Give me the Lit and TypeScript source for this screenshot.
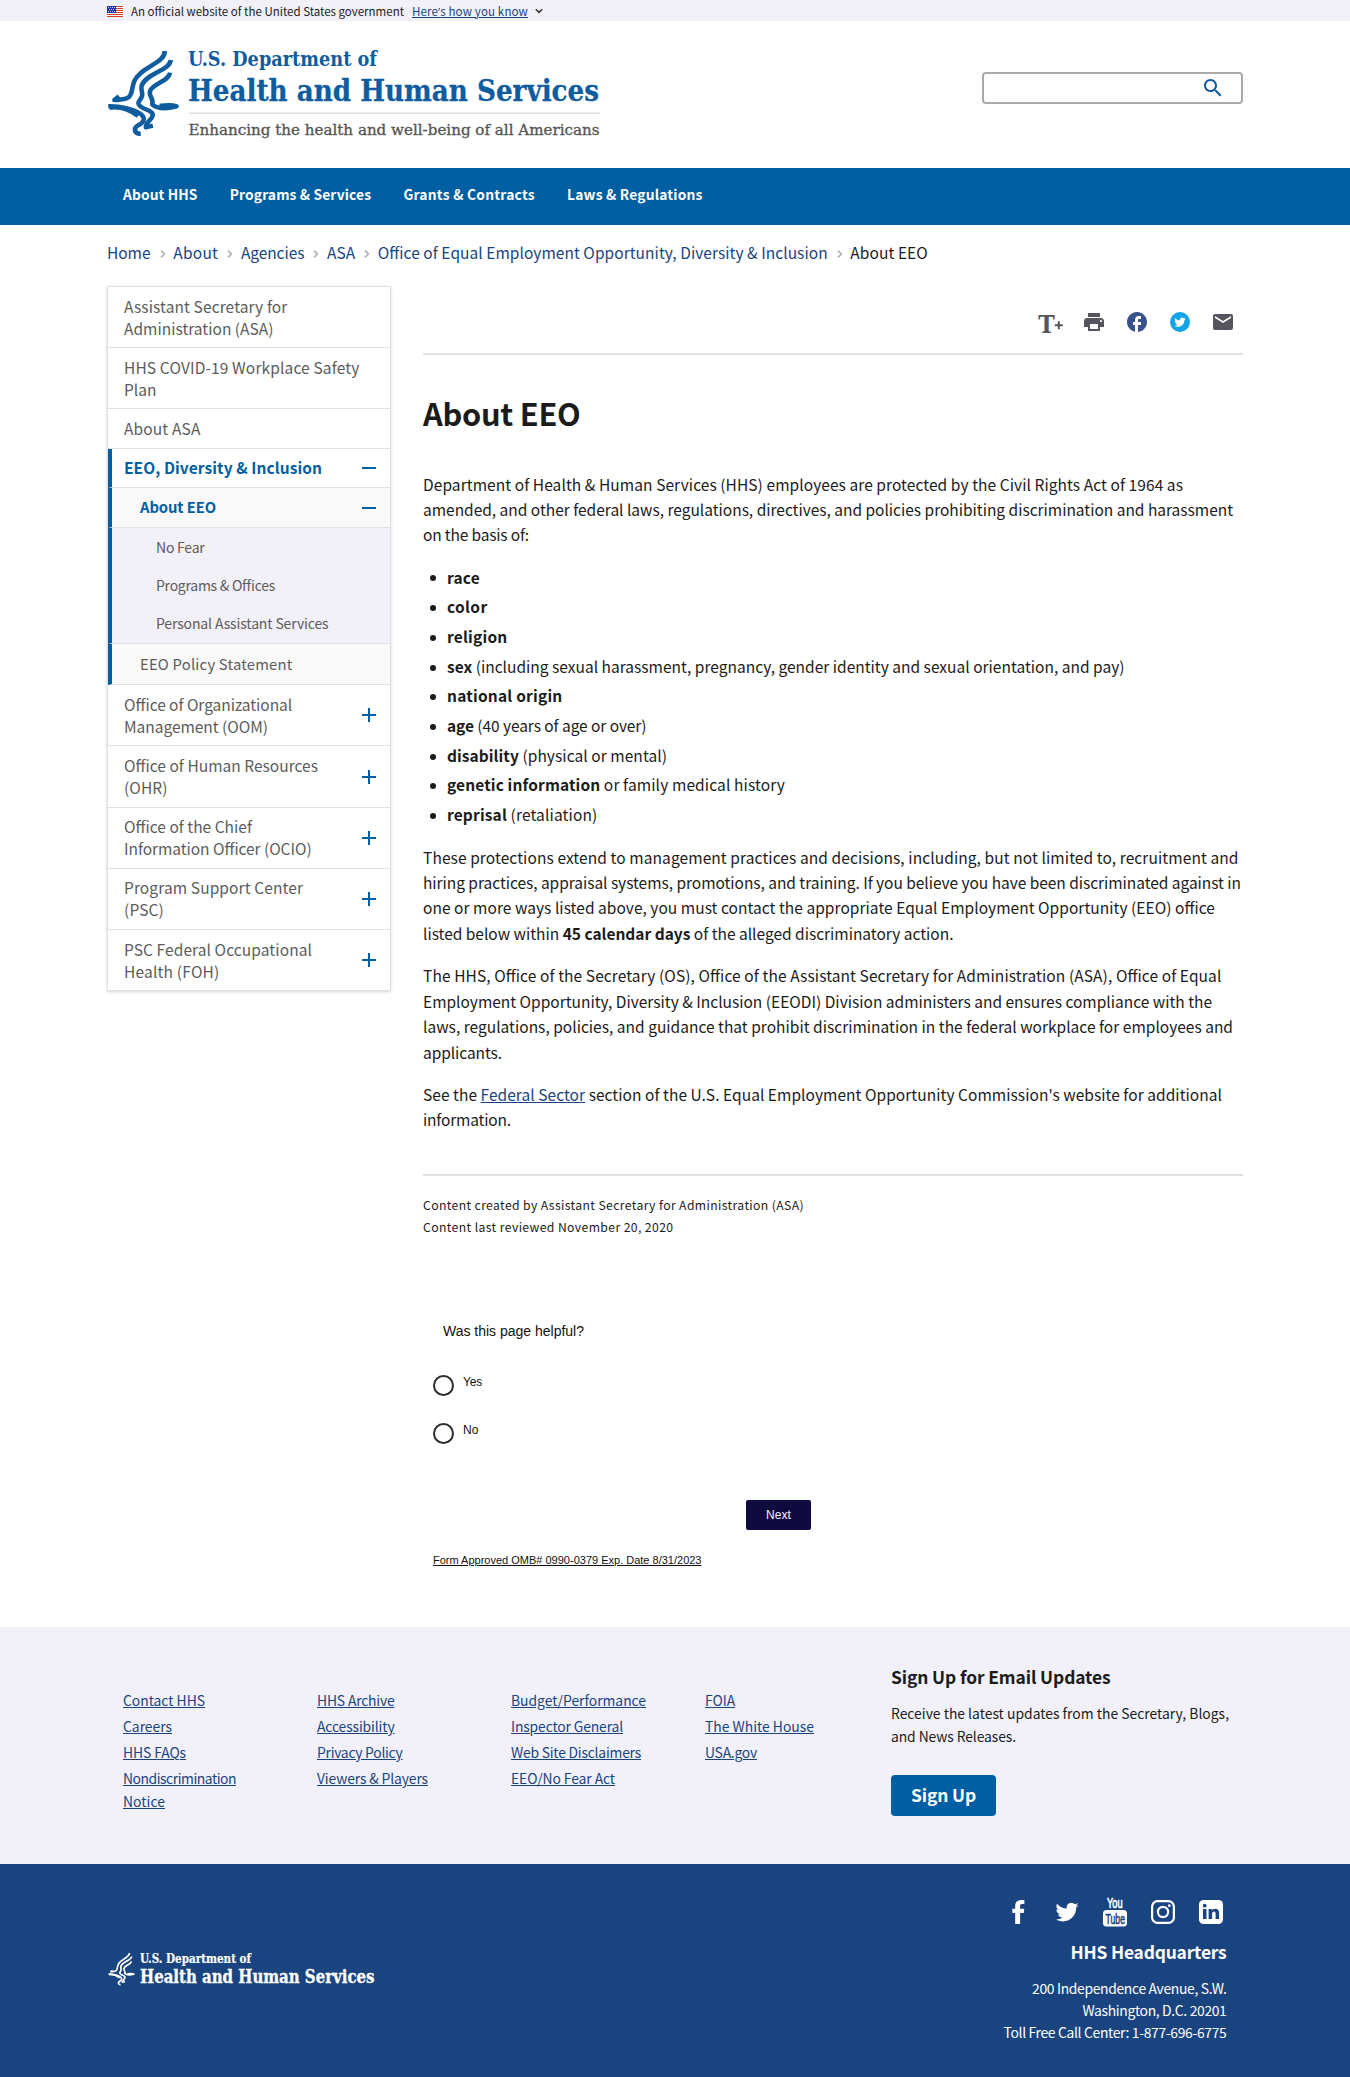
import { LitElement, html, svg, css, nothing } from "lit";
import { customElement, property } from "lit/decorators.js";

/* One line of text whose tracking is adjusted so that it spans a given width. */
@customElement("fit-line")
class FitLine extends LitElement {
  @property({ type: Number }) w = 0;
  static styles = css`
    :host { display: block; white-space: nowrap; font-feature-settings: "liga" 1; }
    .run { display: inline-block; text-decoration: inherit; }
  `;
  render() {
    return html`<span class="run"><slot></slot></span>`;
  }
  firstUpdated() {
    const run = this.renderRoot.querySelector(".run") as HTMLElement;
    const count = (this.textContent || "").trim().length;
    if (!this.w || !count) return;
    const natural = run.getBoundingClientRect().width;
    this.style.letterSpacing = `${((this.w - natural) / count).toFixed(4)}px`;
  }
}

const line = (text: unknown, w: number) => html`<fit-line w=${w}>${text}</fit-line>`;

const TWITTER =
  "M23.953 4.57a10 10 0 01-2.825.775 4.958 4.958 0 002.163-2.723c-.951.555-2.005.959-3.127 1.184a4.92 4.92 0 00-8.384 4.482C7.69 8.095 4.067 6.13 1.64 3.162a4.822 4.822 0 00-.666 2.475c0 1.71.87 3.213 2.188 4.096a4.904 4.904 0 01-2.228-.616v.06a4.923 4.923 0 003.946 4.827 4.996 4.996 0 01-2.212.085 4.936 4.936 0 004.604 3.417 9.867 9.867 0 01-6.102 2.105c-.39 0-.779-.023-1.17-.067a13.995 13.995 0 007.557 2.209c9.053 0 13.998-7.496 13.998-13.985 0-.21 0-.42-.015-.63A9.935 9.935 0 0024 4.59z";

const eagle = svg`
  <g fill="none" stroke-width="13.5" stroke-linejoin="round">
    <path d="M221 153C223 190 150 200 131 243C122 268 126 282 114 292C104 300 90 298 72 300L86 289"/>
    <path d="M239 180C236 212 168 218 153 256C148 272 160 280 152 293C145 306 138 308 148 318C160 330 190 332 185 348C182 362 165 364 165 382L186 377"/>
    <path d="M237 218C232 246 188 248 178 272C172 288 190 296 184 313C200 328 230 326 256 319C240 313 222 316 206 318"/>
    <path d="M54 319C90 318 128 328 148 341C170 356 155 370 142 376C128 384 130 402 150 401"/>
    <path d="M58 323C92 318 124 334 142 348"/>
  </g>`;

interface Item { lines: [string, number][]; mark?: "plus" | "minus"; kind?: string; }

const SIDE: Item[] = [
  { lines: [["Assistant Secretary for", 163.5], ["Administration (ASA)", 149.5]] },
  { lines: [["HHS COVID-19 Workplace Safety", 235.5], ["Plan", 32.5]] },
  { lines: [["About ASA", 76.5]] },
  { lines: [["EEO, Diversity & Inclusion", 198]], mark: "minus", kind: "current" },
  { lines: [["About EEO", 76]], mark: "minus", kind: "sub active" },
  { lines: [["No Fear", 48.5]], kind: "leaf" },
  { lines: [["Programs & Offices", 118.5]], kind: "leaf" },
  { lines: [["Personal Assistant Services", 172.5]], kind: "leaf end" },
  { lines: [["EEO Policy Statement", 152.5]], kind: "sub" },
  { lines: [["Office of Organizational", 168], ["Management (OOM)", 144]], mark: "plus" },
  { lines: [["Office of Human Resources", 194], ["(OHR)", 43.5]], mark: "plus" },
  { lines: [["Office of the Chief", 128], ["Information Officer (OCIO)", 187.5]], mark: "plus" },
  { lines: [["Program Support Center", 179], ["(PSC)", 40]], mark: "plus" },
  { lines: [["PSC Federal Occupational", 188], ["Health (FOH)", 95.5]], mark: "plus" },
];

const LINKS: [string, number][][] = [
  [["Contact HHS", 82], ["Careers", 49], ["HHS FAQs", 63], ["Nondiscrimination", 113], ["Notice", 42]],
  [["HHS Archive", 77.5], ["Accessibility", 77.5], ["Privacy Policy", 85.5], ["Viewers & Players", 111]],
  [["Budget/Performance", 135], ["Inspector General", 112], ["Web Site Disclaimers", 130], ["EEO/No Fear Act", 104]],
  [["FOIA", 30], ["The White House", 109], ["USA.gov", 52]],
];

@customElement("app-root")
class AppRoot extends LitElement {
  static styles = css`
    :host {
      display: block; background: #fff; color: #1b1b1b;
      font-family: "Noto Sans CJK SC", "Open Sans", sans-serif;
      font-size: 15.5px; line-height: 25.44px;
    }
    * { box-sizing: border-box; }
    svg { display: block; flex: none; overflow: visible; }
    p, h1, h2, ul { margin: 0; padding: 0; }
    ul { list-style: none; }
    .wrap { width: 1136px; margin-left: 107px; }
    .banner { height: 21px; background: #f2f1f7; }
    .banner .wrap { display: flex; align-items: center; font-size: 11.5px; line-height: 21px; padding-top: 1px; height: 21px; }
    .banner .txt { margin-left: 8px; }
    .banner .how { margin-left: 8px; color: #1a4480; text-decoration: underline; }
    .banner .arr { margin-left: 7px; }
    .apos { font-family: "Open Sans", sans-serif; }
    .head { height: 147px; display: flex; justify-content: space-between; }
    .logo { margin-top: 27px; }
    .search { width: 261px; height: 32px; margin-top: 51px; border: 2px solid #a9a9ab; border-radius: 4px; display: flex; justify-content: flex-end; align-items: center; padding-right: 16px; }
    .nav { height: 57px; background: #005ea2; color: #fff; font-weight: 700; font-size: 13.8px; line-height: 20px; }
    .nav .wrap { display: flex; gap: 32.2px; padding: 16px 16px 0; }
    .crumbs { display: flex; height: 61px; padding-top: 15px; color: #1a4480; }
    .crumbs svg { margin: 10px 0 0; }
    .crumbs .sep { width: 22.7px; padding-left: 9px; }
    .crumbs .here { color: #1b1b1b; }
    .body { display: flex; gap: 32px; height: 1341px; align-items: flex-start; }
    .side { width: 284px; border: 1px solid #dfe1e2; box-shadow: 0 1px 3px rgba(0,0,0,.16); color: #5c5c5c; line-height: 22.05px; }
    .row { display: flex; justify-content: space-between; align-items: center; padding: 7.6px 14px 8.5px 16px; border-bottom: 1px solid #dfe1e2; }
    .row:last-child { border-bottom: 0; }
    .row svg { margin-top: 1px; }
    .current, .sub, .leaf { border-left: 4px solid #005ea2; padding-left: 12px; }
    .current, .active { color: #005ea2; font-weight: 700; }
    .sub { padding-left: 28px; height: 40.8px; background: #f9f9f9; font-size: 14.8px; }
    .leaf { padding: 7px 14px 9px 44px; height: 38.5px; background: #f2f1f9; border-bottom: 0; font-size: 14px; }
    .leaf.end { border-bottom: 1px solid #dfe1e2; height: 39px; }
    .main { width: 820px; }
    .tools { height: 69px; border-bottom: 2px solid #dfe1e2; display: flex; justify-content: flex-end; gap: 19px; padding: 24px 8px 0 0; }
    h1 { font-size: 30.8px; line-height: 40px; font-weight: 700; margin: 38px 0 38.5px; }
    .main p { margin-bottom: 16.96px; }
    .bullets { margin-bottom: 16.96px; }
    .bullets li { display: flex; align-items: center; margin-bottom: 4.24px; padding-left: 6.5px; }
    .bullets li:last-child { margin-bottom: 0; }
    .dot { width: 6px; height: 6px; border-radius: 3px; background: #1b1b1b; margin: 2px 11.5px 0 0; }
    .link { color: #1a4480; text-decoration: underline; }
    .meta { border-top: 2px solid #dfe1e2; margin-top: 41.3px; padding-top: 19.3px; font-size: 12.2px; line-height: 21.2px; }
    .survey { margin-top: 83.6px; padding-left: 10px; font-family: "Liberation Sans", sans-serif; color: #111; }
    .ask { padding-left: 10px; font-size: 14px; line-height: 20px; margin-bottom: 33px; }
    .opt { display: flex; height: 48px; font-size: 12px; line-height: 16px; gap: 9px; }
    .ring { width: 21px; height: 21px; border: 2px solid #2d2d2d; border-radius: 50%; margin-top: 1px; }
    .next { margin: 30px 0 21.7px 313px; width: 65px; height: 30px; background: #100b3f; color: #f4f4fa; border-radius: 2px; font-size: 12px; line-height: 30px; display: flex; justify-content: center; }
    .omb { font-size: 11px; line-height: 16px; text-decoration: underline; }
    .foot { height: 237px; background: #f2f1f9; }
    .foot .wrap { display: flex; padding-left: 16px; font-size: 13.9px; line-height: 23px; }
    .col { width: 194px; padding-top: 62.1px; display: flex; flex-direction: column; gap: 3px; color: #1a4480; }
    .col fit-line, .omb fit-line, .how fit-line { text-decoration: underline; }
    .tail { margin-top: -3px; }
    .signup { margin-left: -8px; padding-top: 37.8px; }
    h2 { font-size: 17.4px; line-height: 24px; font-weight: 700; }
    .signup h2 { margin-bottom: 13.2px; }
    .btn { margin-top: 27px; width: 105px; height: 41px; padding-left: 20px; border-radius: 4px; background: #005ea2; color: #fff; font-size: 17.4px; font-weight: 700; line-height: 40px; }
    .base { height: 213px; background: #1a4480; color: #fff; }
    .base .wrap { display: flex; justify-content: space-between; padding-right: 16.5px; }
    .base .mark { margin-top: 84px; }
    .hq { display: flex; flex-direction: column; align-items: flex-end; font-size: 13.9px; line-height: 22px; padding-top: 30px; }
    .social { display: flex; gap: 24px; margin: 0 3.5px 10px 0; }
    .hq h2 { margin: 0 0 12.8px; }
  `;

  mark(kind?: string) {
    if (!kind) return nothing;
    return html`<svg width="14" height="14" viewBox="0 0 14 14" fill="#005ea2" shape-rendering="crispEdges">
      <path d="M0 6h14v2H0z" />${kind === "plus" ? svg`<path d="M6 0h2v14H6z"/>` : nothing}
    </svg>`;
  }

  row(i: Item) {
    return html`<div class="row ${i.kind ?? ""}">
      <div>${i.lines.map(([t, w]) => line(t, w))}</div>${this.mark(i.mark)}
    </div>`;
  }

  crumb(t: string, w: number, last = false) {
    return html`<div class=${last ? "here" : ""}>${line(t, w)}</div>
      ${last ? nothing : html`<div class="sep"><svg width="6" height="8" viewBox="0 0 6 8" fill="none" stroke="#a9aeb1" stroke-width="1.5"><path d="M1 .6L4.4 4 1 7.4" /></svg></div>`}`;
  }

  bullet(b: string, rest: string, w: number) {
    return html`<li><span class="dot"></span>${line(html`<b>${b}</b>${rest ? " " + rest : ""}`, w)}</li>`;
  }

  render() {
    return html`
      <div class="banner"><div class="wrap">
        <svg width="16" height="11" viewBox="0 0 16 11">
          <path fill="#fff" d="M0 0h16v11H0z" />
          <path fill="#db3e1f" d="M0 0h16v1H0zM0 2h16v1H0zM0 4h16v1H0zM0 6h16v1H0zM0 8h16v1H0zM0 10h16v1H0z" />
          <path fill="#1e33b1" d="M0 0h9v7H0z" />
          <path fill="#fff" opacity=".75" d="M1 1h1v1H1zM3 1h1v1H3zM5 1h1v1H5zM7 1h1v1H7zM2 3h1v1H2zM4 3h1v1H4zM6 3h1v1H6zM1 5h1v1H1zM3 5h1v1H3zM5 5h1v1H5zM7 5h1v1H7z" />
        </svg>
        <div class="txt">${line("An official website of the United States government", 273)}</div>
        <div class="how">${line(html`Here<span class="apos">’</span>s how you know`, 116)}</div>
        <svg class="arr" width="8" height="6" viewBox="0 0 8 6" fill="none" stroke="#333" stroke-width="1.5"><path d="M.8 1.2L4 4.4l3.2-3.2" /></svg>
      </div></div>

      <div class="wrap head">
        <svg class="logo" width="494" height="92" viewBox="107 48 494 92">
          <g transform="translate(90 0) scale(.33807 .33333)" stroke="#0f5c9f">${eagle}</g>
          <g font-family="DejaVu Serif Condensed, DejaVu Serif, serif" font-stretch="condensed">
            <text x="188" y="65.6" font-size="19.6" font-weight="700" fill="#0f5c9f" textLength="189" lengthAdjust="spacingAndGlyphs">U.S. Department of</text>
            <text x="188" y="101.4" font-size="30.4" font-weight="700" fill="#0f5c9f" stroke="#0f5c9f" stroke-width=".3" textLength="411" lengthAdjust="spacingAndGlyphs">Health and Human Services</text>
            <text x="188.5" y="135" font-size="15.2" fill="#555" stroke="#555" stroke-width=".3" textLength="411" lengthAdjust="spacingAndGlyphs">Enhancing the health and well-being of all Americans</text>
          </g>
          <path fill="#dcdee0" d="M189 112.500h411v1.500H189z" />
        </svg>
        <div class="search"><svg width="24" height="24" viewBox="0 0 24 24" fill="#1159a0"><path d="M15.5 14h-.79l-.28-.27C15.41 12.59 16 11.11 16 9.5 16 5.91 13.09 3 9.5 3S3 5.91 3 9.5 5.91 16 9.5 16c1.61 0 3.09-.59 4.23-1.57l.27.28v.79l5 4.99L20.49 19l-4.99-5zm-6 0C7.01 14 5 11.99 5 9.5S7.01 5 9.5 5 14 7.01 14 9.5 11.99 14 9.5 14z" /></svg></div>
      </div>

      <div class="nav"><div class="wrap">
        ${line("About HHS", 74.5)}${line("Programs & Services", 141.5)}${line("Grants & Contracts", 131.5)}${line("Laws & Regulations", 135.5)}
      </div></div>

      <div class="wrap crumbs">
        ${this.crumb("Home", 43.5)}${this.crumb("About", 45)}${this.crumb("Agencies", 63.5)}${this.crumb("ASA", 28)}
        ${this.crumb("Office of Equal Employment Opportunity, Diversity & Inclusion", 450)}${this.crumb("About EEO", 77.5, true)}
      </div>

      <div class="wrap body">
        <div class="side">${SIDE.map((i) => this.row(i))}</div>
        <div class="main">
          <div class="tools">
            <svg width="26" height="24" viewBox="0 0 26 24" fill="#55555a">
              <text x="1.3" y="23" font-family="DejaVu Serif, serif" font-size="24.5" font-weight="700" textLength="16.5" lengthAdjust="spacingAndGlyphs">T</text>
              <path d="M17.8 14.2h8v2h-8zM20.8 11.2h2v8h-2z" />
            </svg>
            <svg width="24" height="24" viewBox="0 0 24 24" fill="#55555f"><path d="M19 8H5c-1.66 0-3 1.34-3 3v6h4v4h12v-4h4v-6c0-1.66-1.34-3-3-3zm-3 11H8v-5h8v5zm3-7c-.55 0-1-.45-1-1s.45-1 1-1 1 .45 1 1-.45 1-1 1zm-1-9H6v4h12V3z" /></svg>
            <svg width="24" height="24" viewBox="0 0 24 24" fill="#38528c"><path d="M22 12c0-5.52-4.48-10-10-10S2 6.48 2 12c0 4.84 3.44 8.87 8 9.8V15H8v-3h2V9.5C10 7.57 11.57 6 13.5 6H16v3h-2c-.55 0-1 .45-1 1v2h3v3h-3v6.95c5.05-.5 9-4.76 9-9.95z" /></svg>
            <svg width="24" height="24" viewBox="0 0 24 24"><circle cx="12" cy="12" r="10" fill="#14a4e8" /><g transform="translate(6.3 6.6) scale(.47)" fill="#fff"><path d=${TWITTER} /></g></svg>
            <svg width="24" height="24" viewBox="0 0 24 24" fill="#55555f"><path d="M20 4H4c-1.1 0-1.99.9-1.99 2L2 18c0 1.1.9 2 2 2h16c1.1 0 2-.9 2-2V6c0-1.1-.9-2-2-2zm0 4l-8 5-8-5V6l8 5 8-5v2z" /></svg>
          </div>
          <h1>${line("About EEO", 157.5)}</h1>
          <p>
            ${line("Department of Health & Human Services (HHS) employees are protected by the Civil Rights Act of 1964 as", 760)}
            ${line("amended, and other federal laws, regulations, directives, and policies prohibiting discrimination and harassment", 810)}
            ${line("on the basis of:", 106)}
          </p>
          <ul class="bullets">
            ${this.bullet("race", "", 33)}${this.bullet("color", "", 40.5)}${this.bullet("religion", "", 60.5)}
            ${this.bullet("sex", "(including sexual harassment, pregnancy, gender identity and sexual orientation, and pay)", 677.5)}
            ${this.bullet("national origin", "", 115.5)}${this.bullet("age", "(40 years of age or over)", 199.5)}
            ${this.bullet("disability", "(physical or mental)", 220)}${this.bullet("genetic information", "or family medical history", 338)}
            ${this.bullet("reprisal", "(retaliation)", 150.5)}
          </ul>
          <p>
            ${line("These protections extend to management practices and decisions, including, but not limited to, recruitment and", 815.5)}
            ${line("hiring practices, appraisal systems, promotions, and training. If you believe you have been discriminated against in", 818)}
            ${line("one or more ways listed above, you must contact the appropriate Equal Employment Opportunity (EEO) office", 792)}
            ${line(html`listed below within <b>45 calendar days</b> of the alleged discriminatory action.`, 530.5)}
          </p>
          <p>
            ${line("The HHS, Office of the Secretary (OS), Office of the Assistant Secretary for Administration (ASA), Office of Equal", 799)}
            ${line("Employment Opportunity, Diversity & Inclusion (EEODI) Division administers and ensures compliance with the", 789)}
            ${line("laws, regulations, policies, and guidance that prohibit discrimination in the federal workplace for employees and", 810)}
            ${line("applicants.", 79)}
          </p>
          <p>
            ${line(html`See the <span class="link">Federal Sector</span> section of the U.S. Equal Employment Opportunity Commission's website for additional`, 799)}
            ${line("information.", 88)}
          </p>
          <div class="meta">
            ${line("Content created by Assistant Secretary for Administration (ASA)", 381)}
            ${line("Content last reviewed November 20, 2020", 250.5)}
          </div>
          <div class="survey">
            <div class="ask">${line("Was this page helpful?", 141)}</div>
            <div class="opt"><span class="ring"></span>${line("Yes", 19)}</div>
            <div class="opt"><span class="ring"></span>${line("No", 15.5)}</div>
            <div class="next">${line("Next", 25)}</div>
            <div class="omb">${line("Form Approved OMB# 0990-0379 Exp. Date 8/31/2023", 268.5)}</div>
          </div>
        </div>
      </div>

      <div class="foot"><div class="wrap">
        ${LINKS.map((c) => html`<div class="col">${c.map(([t, w]) => html`<div class=${t === "Notice" ? "tail" : ""}>${line(t, w)}</div>`)}</div>`)}
        <div class="signup">
          <h2>${line("Sign Up for Email Updates", 219.5)}</h2>
          ${line("Receive the latest updates from the Secretary, Blogs,", 338)}
          ${line("and News Releases.", 125)}
          <div class="btn">${line("Sign Up", 65)}</div>
        </div>
      </div></div>

      <div class="base"><div class="wrap">
        <svg class="mark" width="270" height="44" viewBox="107 1948 270 44" fill="#fff" font-family="DejaVu Serif Condensed, DejaVu Serif, serif" font-stretch="condensed">
          <g transform="translate(101.8 1933.6) scale(.125 .127)" stroke="#fff">${eagle}</g>
          <text x="140" y="1962.6" font-size="12.2" font-weight="700" stroke="#fff" stroke-width=".2" textLength="111" lengthAdjust="spacingAndGlyphs">U.S. Department of</text>
          <text x="140" y="1983" font-size="17.8" font-weight="700" stroke="#fff" stroke-width=".3" textLength="234.500" lengthAdjust="spacingAndGlyphs">Health and Human Services</text>
        </svg>
        <div class="hq">
          <div class="social">
            <svg width="24" height="36" viewBox="0 0 24 36" fill="#fff"><path d="M17.4 6.3v3.8h-2.2c-1.7 0-2.1.8-2.1 2v2.7h4.2l-.6 4.200h-3.600V30H8.200V19H5.300v-4.200h2.900v-3.100C8.200 8.200 10.600 6.100 14.100 6.100c1.600 0 2.900.1 3.300.2z" /></svg>
            <svg width="24" height="36" viewBox="0 -6 24 36" fill="#fff"><g transform="translate(.5 .6) scale(.96)"><path d=${TWITTER} /></g></svg>
            <svg width="24" height="36" viewBox="0 0 24 36" fill="#fff" font-family="Liberation Sans Narrow, Liberation Sans, sans-serif">
              <text x="4" y="13.800" font-size="14.500" stroke="#fff" stroke-width=".7" textLength="15.500" lengthAdjust="spacingAndGlyphs">You</text>
              <rect x="0" y="16" width="24" height="16.500" rx="3.500" />
              <text x="2.500" y="29.600" font-size="14.500" fill="#1a4480" stroke="#1a4480" stroke-width=".6" textLength="19.500" lengthAdjust="spacingAndGlyphs">Tube</text>
            </svg>
            <svg width="24" height="36" viewBox="0 0 24 36" fill="none" stroke="#fff" stroke-width="2.200"><rect x="1.100" y="7.100" width="21.800" height="21.800" rx="5.500" /><circle cx="12" cy="18" r="5.100" /><circle cx="18.300" cy="11.700" r="1.400" fill="#fff" stroke="none" /></svg>
            <svg width="24" height="36" viewBox="0 0 24 36"><rect y="6" width="24" height="24" rx="4.500" fill="#fff" /><circle cx="5.700" cy="11.700" r="1.900" fill="#1a4480" /><path fill="#1a4480" d="M4 15.100h3.500v9.800H4zM9.600 15.100h3.300v1.400c.6-1 1.700-1.700 3.200-1.700 3 0 4 1.900 4 4.700v5.400h-3.500v-5c0-1.400-.4-2.300-1.600-2.300-1.400 0-1.900 1-1.900 2.400v4.900H9.600z" /></svg>
          </div>
          <h2>${line("HHS Headquarters", 156)}</h2>
          ${line("200 Independence Avenue, S.W.", 194.5)}
          ${line("Washington, D.C. 20201", 144)}
          ${line("Toll Free Call Center: 1-877-696-6775", 223)}
        </div>
      </div></div>
    `;
  }
}
